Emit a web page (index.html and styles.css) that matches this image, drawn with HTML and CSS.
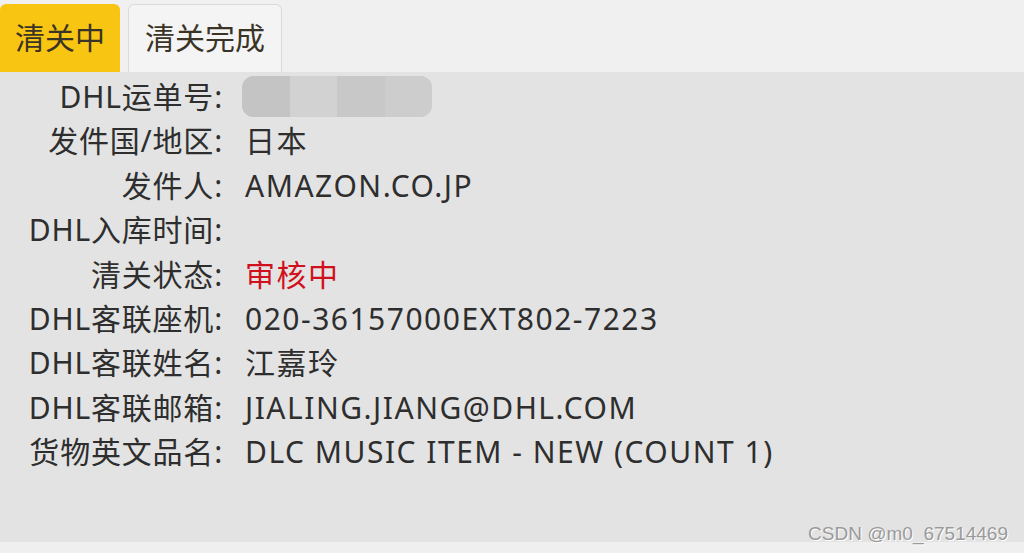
FILE: index.html
```html
<!DOCTYPE html>
<html lang="zh-CN">
<head>
<meta charset="UTF-8" />
<meta name="viewport" content="width=device-width, initial-scale=1" />
<title>清关状态</title>
<link rel="stylesheet" href="styles.css">
</head>
<body>

<div class="tabs">
  <div class="tab active">清关中</div>
  <div class="tab">清关完成</div>
</div>

<section class="panel">
  <dl class="info">
    <dt>DHL运单号:</dt>
    <dd><span class="masked"><i></i><i></i><i></i><i></i></span></dd>
    <dt>发件国/地区:</dt>
    <dd>日本</dd>
    <dt>发件人:</dt>
    <dd>AMAZON.CO.JP</dd>
    <dt>DHL入库时间:</dt>
    <dd></dd>
    <dt>清关状态:</dt>
    <dd class="status">审核中</dd>
    <dt>DHL客联座机:</dt>
    <dd>020-36157000EXT802-7223</dd>
    <dt>DHL客联姓名:</dt>
    <dd>江嘉玲</dd>
    <dt>DHL客联邮箱:</dt>
    <dd>JIALING.JIANG@DHL.COM</dd>
    <dt>货物英文品名:</dt>
    <dd>DLC MUSIC ITEM - NEW (COUNT 1)</dd>
  </dl>
</section>

<div class="footer"></div>
<div class="watermark">CSDN @m0_67514469</div>

</body>
</html>
```

FILE: styles.css
```css
body { margin: 0; background: #f0f0f0; font-family: "Noto Sans", "Noto Sans CJK SC", sans-serif; color: #2e2e2e; }
.tabs { display: flex; gap: 8px; padding-top: 4px; height: 68px; }
.tab { padding: 0 16px; font-size: 30px; line-height: 66px; background: #f4f4f4; border: 1px solid #dadada; border-bottom: none; border-radius: 6px 6px 0 0; color: #3a3426; }
.tab.active { background: #f8c612; border-color: #f8c612; padding: 0 14px; }
.panel { background: #e3e3e3; height: 467px; padding-top: 3px; }
.info { display: grid; grid-template-columns: 222px auto; column-gap: 23px; margin: 0; font-size: 30px; line-height: 44.4px; }
.info dt { text-align: right; letter-spacing: 0.8px; margin-right: -1px; }
.info dd { margin: 0; height: 44.4px; letter-spacing: 1.5px; }
.status { color: #d0101c; }
.masked { display: inline-flex; vertical-align: top; width: 190px; height: 41px; margin: 1px 0 0 -3px; border-radius: 12px; overflow: hidden; background: #c9c9c9; }
.masked i { flex: 1; }
.masked i:nth-child(1) { background: #c4c4c4; }
.masked i:nth-child(2) { background: #d2d2d2; }
.masked i:nth-child(3) { background: #c8c8c8; }
.masked i:nth-child(4) { background: #cdcdcd; }
.footer { height: 11px; background: #efefef; }
.watermark { position: absolute; right: 16px; bottom: 8px; font-family: "Liberation Sans", sans-serif; font-size: 19px; color: #9a9a9a; text-shadow: 1px 1px 0 #fff; }
```
